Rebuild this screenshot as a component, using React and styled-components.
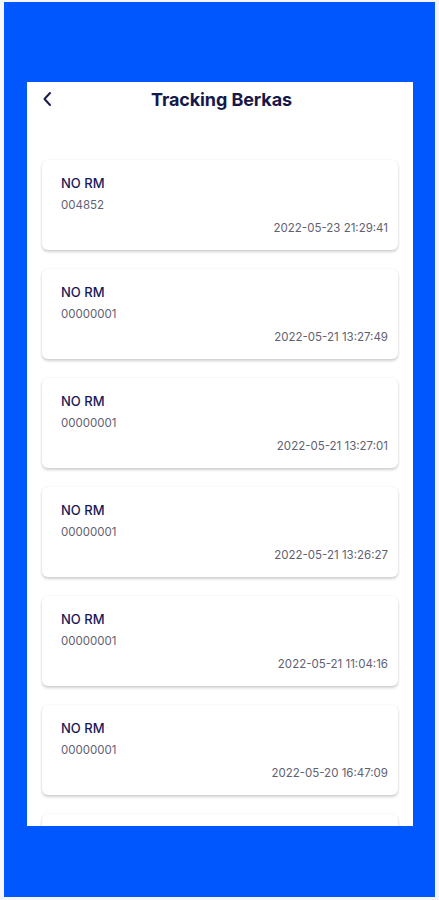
import React from 'react';
import styled, { createGlobalStyle } from 'styled-components';

const GlobalStyle = createGlobalStyle`
  html, body {
    margin: 0;
    padding: 0;
    background: #f4f6fb;
    font-family: 'Inter', 'Noto Sans', sans-serif;
  }
`;

const Frame = styled.div`
  margin: 2px 4px 0 4px;
  height: 895px;
  background: #0057fe;
  padding: 80px 22px 71px 23px;
  box-sizing: border-box;
`;

const Screen = styled.div`
  background: #fff;
  height: 100%;
  overflow: hidden;
  display: flex;
  flex-direction: column;
`;

const Header = styled.div`
  position: relative;
  height: 34px;
  display: flex;
  align-items: center;
  justify-content: center;
  flex-shrink: 0;
`;

const BackButton = styled.button`
  position: absolute;
  left: 12px;
  top: 8px;
  border: 0;
  background: none;
  padding: 0;
  width: 16px;
  height: 18px;
  display: flex;
  align-items: center;
  justify-content: center;
  color: #1c1b4d;
`;

const Title = styled.div`
  font-size: 18px;
  font-weight: 700;
  color: #17174a;
  letter-spacing: -0.1px;
  margin-left: 3px;
`;

const List = styled.div`
  display: flex;
  flex-direction: column;
  gap: 19px;
  padding: 44px 15px 0;
`;

const Card = styled.div`
  height: 90px;
  flex-shrink: 0;
  box-sizing: border-box;
  background: #fff;
  border-radius: 6px;
  box-shadow: 0 2px 3px rgba(0, 0, 0, 0.18), 0 0 2px rgba(0, 0, 0, 0.08);
  padding: 14px 10px 0 19px;
  display: flex;
  flex-direction: column;
`;

const Label = styled.div`
  font-size: 13px;
  font-weight: 500;
  line-height: 18px;
  color: #18185a;
`;

const Value = styled.div`
  font-size: 11.5px;
  line-height: 16px;
  margin-top: 5px;
  color: #5f6173;
`;

const Stamp = styled.div`
  font-size: 11.5px;
  line-height: 16px;
  margin-top: 7px;
  color: #5f6173;
  text-align: right;
`;

const records = [
  { no: '004852', at: '2022-05-23 21:29:41' },
  { no: '00000001', at: '2022-05-21 13:27:49' },
  { no: '00000001', at: '2022-05-21 13:27:01' },
  { no: '00000001', at: '2022-05-21 13:26:27' },
  { no: '00000001', at: '2022-05-21 11:04:16' },
  { no: '00000001', at: '2022-05-20 16:47:09' },
];

function App() {
  return (
    <>
      <GlobalStyle />
      <Frame>
        <Screen>
          <Header>
            <BackButton aria-label="Kembali">
              <svg width="10" height="16" viewBox="0 0 10 16" fill="none">
                <path d="M8 2L2.5 8L8 14" stroke="currentColor" strokeWidth="2" strokeLinecap="round" strokeLinejoin="round" />
              </svg>
            </BackButton>
            <Title>Tracking Berkas</Title>
          </Header>
          <List>
            {records.map((r, i) => (
              <Card key={`rec_${i + 1}`}>
                <Label>NO RM</Label>
                <Value>{r.no}</Value>
                <Stamp>{r.at}</Stamp>
              </Card>
            ))}
            {/* next card, scrolled below the fold */}
            <Card />
          </List>
        </Screen>
      </Frame>
    </>
  );
}

export default App;
